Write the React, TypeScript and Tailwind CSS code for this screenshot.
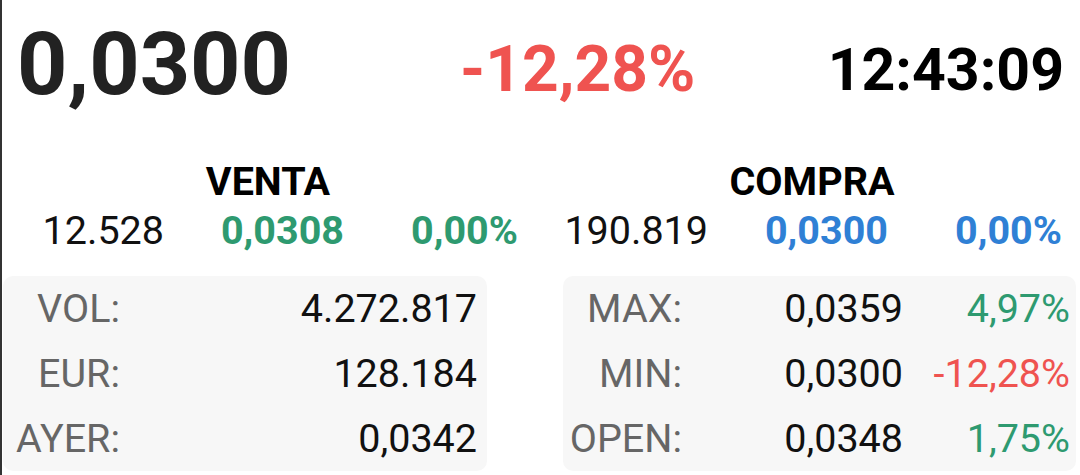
type Tone = 'up' | 'down' | 'bid' | 'plain';

const toneClass: Record<Tone, string> = {
  up: 'text-[#2e9a70]',
  down: 'text-[#ef5350]',
  bid: 'text-[#2f80d5]',
  plain: 'text-[#111111]'
};

interface Side {
  title: string;
  qty: string;
  price: string;
  change: string;
  tone: Tone;
}

const sides: Side[] = [
  { title: 'VENTA', qty: '12.528', price: '0,0308', change: '0,00%', tone: 'up' },
  { title: 'COMPRA', qty: '190.819', price: '0,0300', change: '0,00%', tone: 'bid' }
];

const volumeRows = [
  { label: 'VOL:', value: '4.272.817' },
  { label: 'EUR:', value: '128.184' },
  { label: 'AYER:', value: '0,0342' }
];

const rangeRows: { label: string; value: string; pct: string; tone: Tone }[] = [
  { label: 'MAX:', value: '0,0359', pct: '4,97%', tone: 'up' },
  { label: 'MIN:', value: '0,0300', pct: '-12,28%', tone: 'down' },
  { label: 'OPEN:', value: '0,0348', pct: '1,75%', tone: 'up' }
];

function SideBlock({ side, className }: { side: Side; className: string }) {
  return (
    <div className={className}>
      <div className="w-[532px] text-center text-[39.5px] leading-none font-bold text-black">
        {side.title}
      </div>
      <div className="flex mt-[9px] text-[39.5px] leading-none">
        <span className="w-[162px] text-right text-[#111111]">{side.qty}</span>
        <span className={`w-[180px] text-right font-bold ${toneClass[side.tone]}`}>
          {side.price}
        </span>
        <span className={`w-[174px] text-right font-bold ${toneClass[side.tone]}`}>
          {side.change}
        </span>
      </div>
    </div>
  );
}

export default function App() {
  return (
    <div className="w-[1080px] h-[475px] overflow-hidden bg-white border-l-2 border-[#333333] font-[family-name:Roboto,sans-serif]">
      {/* Last price, daily change, time */}
      <div className="flex items-start pt-[20px] pl-[15px] pr-[16px]">
        <span className="text-[88px] leading-none font-bold text-[#222222]">0,0300</span>
        <span className="ml-[169px] mt-[18px] text-[64px] leading-none font-bold text-[#ef5350]">
          -12,28%
        </span>
        <span className="ml-auto mt-[20px] text-[59px] leading-none font-bold text-black">
          12:43:09
        </span>
      </div>

      {/* Order book sides */}
      <div className="flex mt-[54px]">
        <SideBlock side={sides[0]} className="w-[544px] shrink-0" />
        <SideBlock side={sides[1]} className="w-[534px] shrink-0" />
      </div>

      {/* Session stats */}
      <div className="flex mt-[26px] pl-px pr-[4px]">
        <div className="w-[484px] h-[195px] rounded-[10px] bg-[#f7f7f7] flex flex-col text-[39.5px] leading-none">
          {volumeRows.map((row) => (
            <div key={row.label} className="h-[65px] flex items-center">
              <span className="w-[117px] text-right text-[#666666]">{row.label}</span>
              <span className="flex-1 text-right pr-[10px] text-[#111111]">{row.value}</span>
            </div>
          ))}
        </div>
        <div className="ml-auto w-[513px] h-[195px] rounded-[10px] bg-[#f7f7f7] flex flex-col text-[39.5px] leading-none">
          {rangeRows.map((row) => (
            <div key={row.label} className="h-[65px] flex items-center">
              <span className="w-[119px] text-right text-[#666666]">{row.label}</span>
              <span className="w-[221px] text-right text-[#111111]">{row.value}</span>
              <span className={`flex-1 text-right pr-[6px] ${toneClass[row.tone]}`}>
                {row.pct}
              </span>
            </div>
          ))}
        </div>
      </div>
    </div>
  );
}
